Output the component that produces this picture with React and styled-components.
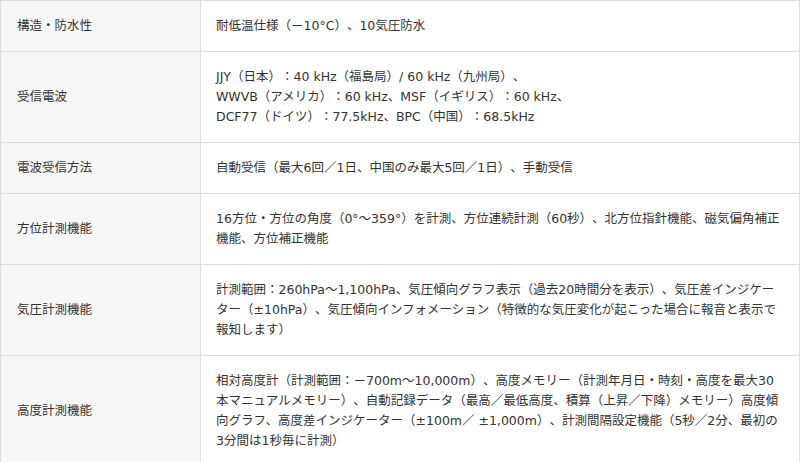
import styled, { createGlobalStyle } from "styled-components";

const GlobalStyle = createGlobalStyle`
  html, body {
    margin: 0;
    padding: 0;
    background: #ffffff;
  }
  body {
    font-family: "DejaVu Sans", "Noto Sans CJK JP", sans-serif;
    color: #333333;
  }
`;

const SpecTable = styled.table`
  width: 800px;
  border-collapse: collapse;
  table-layout: fixed;
  font-size: 12.5px;
  line-height: 20px;
  text-spacing-trim: space-all;
`;

const LabelCell = styled.th`
  width: 200px;
  box-sizing: border-box;
  padding: 15px 16px;
  background-color: #f7f7f7;
  border: 1px solid #dddddd;
  font-weight: normal;
  text-align: left;
  vertical-align: middle;
  color: #333333;
`;

const ValueCell = styled.td`
  padding: 15px 8px 15px 15px;
  border: 1px solid #dddddd;
  vertical-align: middle;
  color: #333333;
`;

const Line = styled.span`
  display: block;
  white-space: nowrap;
`;

const specs = [
  { label: "構造・防水性", value: ["耐低温仕様（－10°C）、10気圧防水"] },
  {
    label: "受信電波",
    value: [
      "JJY（日本）：40 kHz（福島局）/ 60 kHz（九州局）、",
      "WWVB（アメリカ）：60 kHz、MSF（イギリス）：60 kHz、",
      "DCF77（ドイツ）：77.5kHz、BPC（中国）：68.5kHz",
    ],
  },
  {
    label: "電波受信方法",
    value: ["自動受信（最大6回／1日、中国のみ最大5回／1日）、手動受信"],
  },
  {
    label: "方位計測機能",
    value: [
      "16方位・方位の角度（0°～359°）を計測、方位連続計測（60秒）、北方位指針機能、磁気偏角補正",
      "機能、方位補正機能",
    ],
  },
  {
    label: "気圧計測機能",
    value: [
      "計測範囲：260hPa～1,100hPa、気圧傾向グラフ表示（過去20時間分を表示）、気圧差インジケー",
      "ター（±10hPa）、気圧傾向インフォメーション（特徴的な気圧変化が起こった場合に報音と表示で",
      "報知します）",
    ],
  },
  {
    label: "高度計測機能",
    value: [
      "相対高度計（計測範囲：－700m～10,000m）、高度メモリー（計測年月日・時刻・高度を最大30",
      "本マニュアルメモリー）、自動記録データ（最高／最低高度、積算（上昇／下降）メモリー）高度傾",
      "向グラフ、高度差インジケーター（±100m／ ±1,000m）、計測間隔設定機能（5秒／2分、最初の",
      "3分間は1秒毎に計測）",
    ],
  },
];

export default function App() {
  return (
    <>
      <GlobalStyle />
      <SpecTable>
        <tbody>
          {specs.map((row) => (
            <tr key={row.label}>
              <LabelCell scope="row">{row.label}</LabelCell>
              <ValueCell>
                {row.value.map((line, i) => (
                  <Line key={i}>{line}</Line>
                ))}
              </ValueCell>
            </tr>
          ))}
        </tbody>
      </SpecTable>
    </>
  );
}
